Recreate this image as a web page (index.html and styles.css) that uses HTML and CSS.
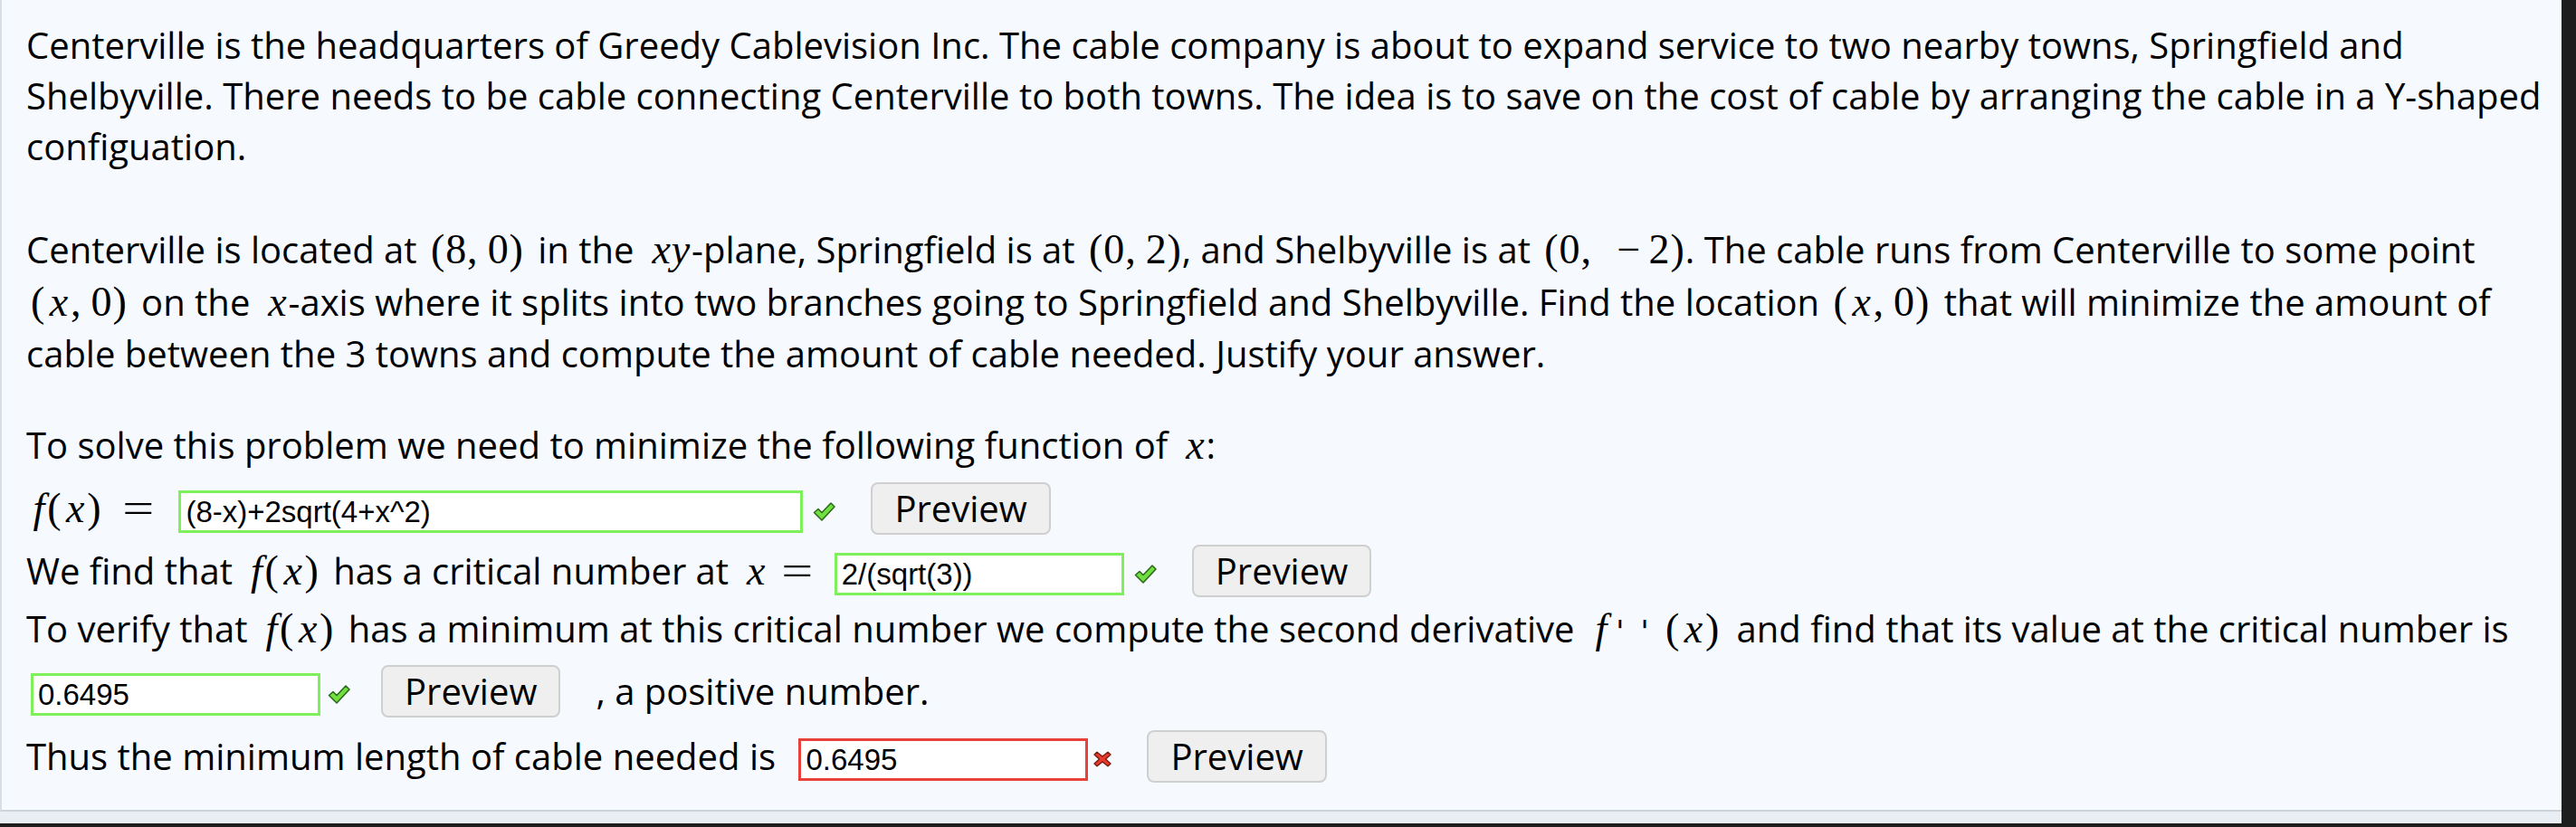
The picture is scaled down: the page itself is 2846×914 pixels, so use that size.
FILE: index.html
```html
<!DOCTYPE html>
<html lang="en">
<head>
<meta charset="utf-8">
<title>Greedy Cablevision</title>
<link rel="stylesheet" href="styles.css">
</head>
<body>
<div class="screen">
  <div class="frame">
    <main class="panel">
      <div class="content">
        <p class="para p1">Centerville is the headquarters of Greedy Cablevision Inc. The cable company is about to expand service to two nearby towns, Springfield and Shelbyville. There needs to be cable connecting Centerville to both towns. The idea is to save on the cost of cable by arranging the cable in a Y-shaped configuation.</p>
        <p class="para p2">Centerville is located at <span class="m">(8,<span class="th"></span>0)</span> in the <span class="m tr"><i>xy</i></span>-plane, Springfield is at <span class="m tr">(0,<span class="th"></span>2)</span>, and Shelbyville is at <span class="m tr">(0,<span class="th"></span><span class="bin">−</span>2)</span>. The cable runs from Centerville to some point <span class="m">(<i>x</i>,<span class="th"></span>0)</span> on the <span class="m tr"><i>x</i></span>-axis where it splits into two branches going to Springfield and Shelbyville. Find the location <span class="m">(<i>x</i>,<span class="th"></span>0)</span> that will minimize the amount of cable between the 3 towns and compute the amount of cable needed. Justify your answer.</p>
        <div class="row r-solve">To solve this problem we need to minimize the following function of <span class="m tr"><i>x</i></span>:</div>
        <div class="row r1"><span class="m"><i>f</i>(<i>x</i>)<span class="rel">=</span></span><input class="ans ok wide" type="text" value="(8-x)+2sqrt(4+x^2)" readonly><svg class="mark check" viewBox="0 0 27 23" aria-label="correct"><path d="M2.5 12.5 L7 8.5 L11 12.5 L21 2 L25 6 L11 21 Z"/></svg><button class="preview" type="button">Preview</button></div>
        <div class="row r2">We find that <span class="m"><i>f</i>(<i>x</i>)</span> has a critical number at <span class="m"><i>x</i><span class="rel">=</span></span><input class="ans ok" type="text" value="2/(sqrt(3))" readonly><svg class="mark check" viewBox="0 0 27 23" aria-label="correct"><path d="M2.5 12.5 L7 8.5 L11 12.5 L21 2 L25 6 L11 21 Z"/></svg><button class="preview" type="button">Preview</button></div>
        <div class="row r3">To verify that <span class="m"><i>f</i>(<i>x</i>)</span> has a minimum at this critical number we compute the second derivative <span class="m fpp"><i>f</i><span class="prime">''</span>(<i>x</i>)</span> and find that its value at the critical number is</div>
        <div class="row r4"><input class="ans ok lead" type="text" value="0.6495" readonly><svg class="mark check" viewBox="0 0 27 23" aria-label="correct"><path d="M2.5 12.5 L7 8.5 L11 12.5 L21 2 L25 6 L11 21 Z"/></svg><button class="preview" type="button">Preview</button><span class="after">, a positive number.</span></div>
        <div class="row r5">Thus the minimum length of cable needed is <input class="ans bad" type="text" value="0.6495" readonly><svg class="mark cross" viewBox="0 0 22 18" aria-label="incorrect"><path d="M2 4 L5 1.2 L11 6 L17 1.2 L20 4 L14.5 9 L20 14 L17 16.8 L11 12 L5 16.8 L2 14 L7.5 9 Z"/></svg><button class="preview" type="button">Preview</button></div>
      </div>
    </main>
    <div class="strip"></div>
  </div>
  <div class="sidebar"></div>
</div>
</body>
</html>
```

FILE: styles.css
```css
html, body {
  margin: 0;
  padding: 0;
}

body {
  background: #1e1e1e;
  overflow: hidden;
  font-family: "Open Sans", "Noto Sans", sans-serif;
  color: #000;
}

.screen {
  display: flex;
  height: 914px;
  width: 2846px;
}

.frame {
  width: 2830px;
  height: 910px;
  flex-shrink: 0;
  display: flex;
  flex-direction: column;
}

.panel {
  flex: 1;
  background: #f6faff;
  border-left: 2px solid #d7dee5;
  border-bottom: 2px solid #cbd4db;
  overflow: hidden;
  padding: 22px 0 0 27px;
}

.strip {
  height: 13px;
  background: #e8eef4;
}

.sidebar {
  flex: 1;
  background: #1e1e1e;
}

.content {
  width: 2810px;
  font-size: 40px;
}

.para {
  margin: 0;
}

.p1 {
  line-height: 56px;
}

.p2 {
  margin-top: 57px;
  line-height: 57.5px;
}

.row {
  white-space: nowrap;
}

.r-solve {
  margin-top: 37px;
  line-height: 70px;
}

.r1 { line-height: 70px; }
.r2 { line-height: 68px; }
.r3 { line-height: 60px; }
.r4 { line-height: 78px; }
.r5 { line-height: 66px; }

/* math */
.m {
  font-family: "Liberation Serif", "DejaVu Serif", serif;
  font-size: 46px;
  line-height: 1;
  letter-spacing: 0.02em;
  padding: 0 5px;
  white-space: nowrap;
}

.m i {
  font-style: italic;
  padding: 0 0.04em 0 0.1em;
}

.m.tr {
  padding-right: 0;
}

.m.tr i:last-child {
  padding-right: 0.02em;
}

.m .th {
  display: inline-block;
  width: 0.22em;
}

.m .bin {
  margin: 0 0.18em 0 0.38em;
}

.m .rel {
  display: inline-block;
  transform: scaleX(1.35);
  margin: 0 0.42em;
}

.r1 .m {
  padding-left: 3px;
}

.r1 .m .rel {
  margin: 0 0.49em 0 0.6em;
}

.m.fpp {
  padding: 0 8px;
}

.m .prime {
  font-family: "DejaVu Sans", sans-serif;
  font-style: normal;
  font-size: 0.72em;
  letter-spacing: 0.55em;
  margin-left: 0.22em;
}

/* answer inputs */
.ans {
  box-sizing: border-box;
  width: 320px;
  height: 47px;
  margin: 0 0 0 3px;
  padding: 0 5px;
  border: 3px solid #7ef05c;
  background: #fff;
  font-family: "Liberation Sans", Arial, sans-serif;
  font-size: 33px;
  color: #000;
  vertical-align: baseline;
  outline: none;
}

.ans.wide {
  width: 690px;
}

.ans.lead {
  margin-left: 5px;
}

.ans.bad {
  border-color: #e8403a;
  margin-left: 15px;
}

.mark {
  display: inline-block;
  vertical-align: baseline;
  margin-left: 10px;
}

.check {
  width: 27px;
  height: 23px;
}

.check path {
  fill: #6fe03f;
  stroke: #2f6a1c;
  stroke-width: 1.6;
  stroke-linejoin: round;
}

.cross {
  width: 22px;
  height: 18px;
  vertical-align: 3px;
  margin-left: 5px;
}

.cross path {
  fill: #e53a2d;
  stroke: #7c1a12;
  stroke-width: 1.4;
  stroke-linejoin: round;
}

.preview {
  display: inline-block;
  box-sizing: border-box;
  height: 58px;
  margin-left: 38px;
  padding: 0 24px;
  border: 2px solid #cfcfcf;
  border-radius: 8px;
  background: #efefef;
  font-family: "Open Sans", "Noto Sans", sans-serif;
  font-size: 40px;
  line-height: 54px;
  color: #000;
  vertical-align: baseline;
}

.r4 .mark {
  margin-left: 7px;
}

.r4 .preview {
  margin-left: 33px;
}

.after {
  margin-left: 39px;
}
```
